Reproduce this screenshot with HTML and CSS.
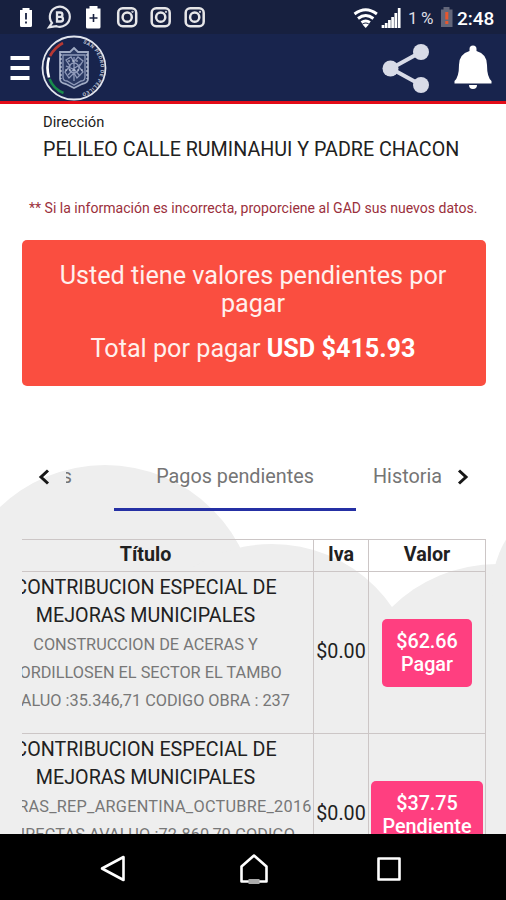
FILE: index.html
```html
<!DOCTYPE html>
<html lang="es">
<head>
<meta charset="utf-8">
<title>Pagos pendientes</title>
<link rel="stylesheet" href="styles.css">
</head>
<body>
<div class="screen">
  <div class="statusbar">
    <svg class="notifications" width="210" height="34" viewBox="0 0 210 34">
      <path fill="#fff" d="M22.500 8h7v2H32v15.500q0 1.500-1.500 1.500h-9q-1.500 0-1.500-1.500V10h2.500z"/>
      <path stroke="#17203f" stroke-width="1.800" d="M26 13v6.500m0 2v2"/>
      <g fill="none" stroke="#e4e5ea" stroke-width="2.200"><path d="M52 23a10 10 0 1 1 4.500 3.200L49 27.200z"/></g>
      <path fill="none" stroke="#e4e5ea" stroke-width="2.300" d="M57 12.500h3.200a2.200 2.200 0 0 1 0 4.400H57zm0 4.400h3.700a2.300 2.300 0 0 1 0 4.600H57z"/>
      <path fill="#fff" d="M89.500 6h8v2.500h3V27q0 1.500-1.500 1.500H87.500Q86 28.500 86 27V8.500h3.500z"/>
      <path stroke="#17203f" stroke-width="1.600" d="M89.500 18h8m-4-4v8"/>
      <g fill="none" stroke="#e6e6e8" stroke-width="2.500">
        <g id="camera"><rect x="118.200" y="8.200" width="18" height="18" rx="4.500"/><circle cx="127.200" cy="17.200" r="4.600"/><circle cx="132.500" cy="11.800" r=".4" stroke-width="1.500"/></g>
        <use href="#camera" x="33.500"/><use href="#camera" x="67.500"/>
      </g>
    </svg>
    <svg class="signal" width="52" height="26" viewBox="353 4 52 26">
      <g fill="none" stroke="#fff" stroke-width="2.900"><path d="M354.500 14q11.200-8.500 22.400 0M358 18.500q7.700-6 15.400 0M361.500 22.500q4.200-3 8.400 0"/></g>
      <path fill="#fff" d="M362.500 24.500q3.200-2 6.400 0l-3.200 3.500z"/>
      <path stroke="#fff" stroke-width="2.700" d="M383 28v-3m3.200 3v-5m3.200 5v-8m3.200 8V17m3.200 11V13m3.400 15V8"/>
    </svg>
    <span class="percent">1&thinsp;%</span>
    <svg class="battery" width="14" height="22" viewBox="0 0 14 22"><path fill="#64677a" d="M3.500 1h6v2.500h3V21H1V3.500h2.500z"/><path stroke="#e8572e" stroke-width="3" d="M6.800 6v7.500m0 1.500v3"/></svg>
    <span class="clock">2:48</span>
  </div>

  <header class="appbar">
    <svg class="menu" width="20" height="26" viewBox="0 0 20 26"><path stroke="#fff" stroke-width="4" d="M.5 3h19M.5 13h19M.5 23h19"/></svg>
    <svg class="seal" width="66" height="66" viewBox="0 0 66 66">
      <circle cx="33" cy="33" r="31.500" fill="none" stroke="#e1e5ee" stroke-width="1.800"/>
      <g fill="none" stroke-width="2.600">
        <path stroke="#b73833" d="M9 21Q14 12 22 8"/><path stroke="#fff" d="M8 22.500q-3 10 0 20"/><path stroke="#188b4b" d="M8.500 44q4 10 14 14"/>
      </g>
      <path id="ring" fill="none" d="M42 8A26.500 26.500 0 0 1 42 58"/>
      <text class="seal-text"><textPath href="#ring" textLength="66">SAN PEDRO DE PELILEO</textPath></text>
      <path fill="#2a3963" stroke="#a0abc4" stroke-width="1.800" d="M33 13l4 4h10v27q0 4-6 5l-8 4-8-4q-6-1-6-5V17h10z"/>
      <g fill="none" stroke="#8f9aba" stroke-width="1.300"><path d="M22 20h22v22q0 4-4 4l-7 4-7-4q-4 0-4-4z"/><path d="M25 25l5-3 3 5 4-5 5 4-4 6 4 5-6 6-3-5-5 5-4-6 5-6z"/><circle cx="33" cy="33" r="5"/><path d="M25 31l7 3 8-5M27 40l6-6 6 7M33 22v24"/></g>
      <path fill="none" stroke="#c4cbdc" stroke-width="1.200" stroke-dasharray="2 2" d="M20 19v25m26-25v25M24 35h18M27 26h12"/>
    </svg>
    <svg class="share" width="48" height="50" viewBox="0 0 48 50"><path fill="none" stroke="#d8dbe7" stroke-width="4" d="M39 9L9 25.500 39 42"/><g fill="#d8dbe7"><circle cx="39" cy="9" r="8"/><circle cx="8.500" cy="25.500" r="8"/><circle cx="39" cy="42" r="8"/></g></svg>
    <svg class="bell" width="38" height="46" viewBox="0 0 38 46"><path fill="#fff" d="M15.500 6V4a3.500 3.500 0 0 1 7 0v2Q33 9 33 20q0 12 4.500 16v2.500H.5V36Q5 32 5 20 5 9 15.500 6zM15 40h8q0 4-4 4t-4-4z"/></svg>
  </header>

  <main class="content">
    <svg class="clouds" width="506" height="370" viewBox="0 464 506 370"><g fill="#eee"><circle cx="105" cy="617" r="152"/><circle cx="272" cy="690" r="146"/><circle cx="497" cy="714" r="150"/><circle cx="590" cy="590" r="98"/><path d="M0 600h200l192 8 100 40h14v186H0z"/></g></svg>
    <section class="address">
      <div class="label">Dirección</div>
      <div class="street">PELILEO CALLE RUMINAHUI Y PADRE CHACON</div>
    </section>
    <p class="notice">** Si la información es incorrecta, proporciene al GAD sus nuevos datos.</p>
    <section class="alert">
      <p class="alert-title">Usted tiene valores pendientes por pagar</p>
      <p class="alert-total">Total por pagar <b>USD $415.93</b></p>
    </section>
    <nav class="tabs">
      <svg class="chevron" width="12" height="16" viewBox="0 0 12 16"><path d="M10 1.500L3 8l7 6.500"/></svg>
      <div class="tab previous"><span>s</span></div>
      <div class="tab active">Pagos pendientes</div>
      <div class="tab next">Historia</div>
      <svg class="chevron" width="12" height="16" viewBox="0 0 12 16"><path d="M2 1.500L9 8l-7 6.500"/></svg>
    </nav>
    <div class="table">
      <div class="row head"><div>Título</div><div>Iva</div><div>Valor</div></div>
      <div class="row">
        <div class="concept">
          <div>CONTRIBUCION ESPECIAL DE</div><div>MEJORAS MUNICIPALES</div>
          <div class="detail">CONSTRUCCION DE ACERAS Y</div><div class="detail">BORDILLOSEN EL SECTOR EL TAMBO</div><div class="detail">AVALUO :35.346,71 CODIGO OBRA : 237</div>
        </div>
        <div class="iva">$0.00</div>
        <div class="value"><button class="pay">$62.66<br>Pagar</button></div>
      </div>
      <div class="row">
        <div class="concept">
          <div>CONTRIBUCION ESPECIAL DE</div><div>MEJORAS MUNICIPALES</div>
          <div class="detail project">OBRAS_REP_ARGENTINA_OCTUBRE_2016</div><div class="detail appraisal">DIRECTAS AVALUO :72.860,79 CODIGO</div>
        </div>
        <div class="iva">$0.00</div>
        <div class="value"><button class="pay pending">$37.75<br>Pendiente</button></div>
      </div>
    </div>
  </main>

  <footer class="navbar">
    <svg width="26" height="30" viewBox="0 0 26 30"><path d="M23.500 3v23L2 14.500z"/></svg>
    <svg width="30" height="32" viewBox="0 0 30 32"><path d="M2.500 28.500V13.500L15 2.500l12.500 11v15z"/><path class="home-base" d="M9.500 28.500h11"/></svg>
    <svg width="26" height="26" viewBox="0 0 26 26"><rect x="2.500" y="2.500" width="21" height="21"/></svg>
  </footer>
</div>
</body>
</html>
```
FILE: styles.css
```css
* { box-sizing: border-box; }
body { margin: 0; background: #fff; font-family: Roboto, "Liberation Sans", sans-serif; color: #212121; }
p { margin: 0; }
.screen { width: 506px; height: 900px; display: flex; flex-direction: column; overflow: hidden; }

.statusbar { height: 34px; flex: none; display: flex; align-items: center; background: #17203f; color: #fff; }
.signal { margin-left: 143px; }
.percent { width: 27px; margin-left: 3px; font-size: 17px; line-height: 34px; padding-top: 2px; white-space: nowrap; color: #dcdde3; }
.battery { margin-left: 5px; margin-right: 5px; }
.clock { font-size: 19px; font-weight: 500; padding-top: 2px; margin-left: -2px; white-space: nowrap; }

.appbar { height: 70px; flex: none; display: flex; align-items: center; background: #18244d; border-bottom: 3px solid #e30b17; }
.menu { margin-left: 10px; }
.seal { margin-left: 11px; }
.seal-text { font-size: 5px; font-weight: 700; fill: #c1c8d9; }
.share { margin-left: 275px; }
.bell { margin-left: 24px; }

.content { position: relative; flex: 1; min-height: 0; overflow: hidden; display: flex; flex-direction: column; padding: 0 21px; }
.content > * { position: relative; flex: none; }
.content > .clouds { position: absolute; left: 0; bottom: 0; }
.address { padding: 8px 0 0 22px; }
.label { font-size: 14.700px; line-height: 20px; }
.street { font-size: 19.700px; line-height: 24px; margin-top: 6px; white-space: nowrap; }
.notice { margin-top: 36px; padding-left: 8px; font-size: 14.060px; line-height: 20px; color: #9b303c; white-space: nowrap; }
.alert { height: 146px; margin: 22px -1px 0 1px; padding: 22px 21px 0 19px; border-radius: 5px; background: #fa4e40; color: #fff0ed; text-align: center; font-size: 25.200px; line-height: 28px; }
.alert-total { margin-top: 17px; }
.alert b { color: #fff; }

.tabs { display: flex; align-items: center; height: 68px; margin-top: 57px; font-size: 19.800px; color: #757575; padding-left: 17px; }
.chevron { flex: none; fill: none; stroke: #171717; stroke-width: 3; }
.tab { height: 68px; line-height: 68px; white-space: nowrap; overflow: hidden; }
.previous { width: 64px; padding-left: 16px; }
.previous span { display: flex; width: 6px; overflow: hidden; justify-content: flex-end; }
.active { width: 242px; text-align: center; border-bottom: 3px solid #2530a4; }
.next { width: 86px; padding-left: 17px; margin-right: 15px; }

.table { width: 464px; margin: 28px 0 0 1px; overflow: hidden; border-top: 1px solid #ccc6c6; }
.row { width: 508px; margin-left: -44px; display: grid; grid-template-columns: 336px 55px 117px; border-bottom: 1px solid #ccc6c6; height: 162px; font-size: 19.700px; line-height: 28px; }
.row > div { border-right: 1px solid #ccc6c6; display: flex; align-items: center; justify-content: center; white-space: nowrap; padding-bottom: 2px; }
.row.head { height: 32px; font-weight: 700; }
.row.head > div { padding-bottom: 1px; }
.row > .value { padding: 1px 0 0; }
.row > .concept { flex-direction: column; justify-content: flex-start; padding-top: 2px; }
.detail { font-size: 16.300px; color: #777; }
.detail:nth-child(3) { margin-top: 1px; }
.project { padding-left: 17px; letter-spacing: .25px; }
.appraisal { padding-left: 14px; letter-spacing: .12px; }
.pay { width: 90px; height: 68px; flex: none; border: 0; border-radius: 5px; padding: 0; background: #ff3f80; color: #fff; font-family: inherit; font-weight: 500; font-size: 19.800px; line-height: 23px; }
.pending { width: 112px; }

.navbar { height: 66px; flex: none; display: flex; align-items: center; background: #000; padding: 4px 0 0 100px; }
.navbar svg { fill: none; stroke: #fff; stroke-width: 2.600; stroke-linejoin: round; }
.navbar svg:nth-child(2) { margin: 0 107px 0 112.500px; }
.navbar .home-base { stroke: #aaa; stroke-width: 5; }
```
